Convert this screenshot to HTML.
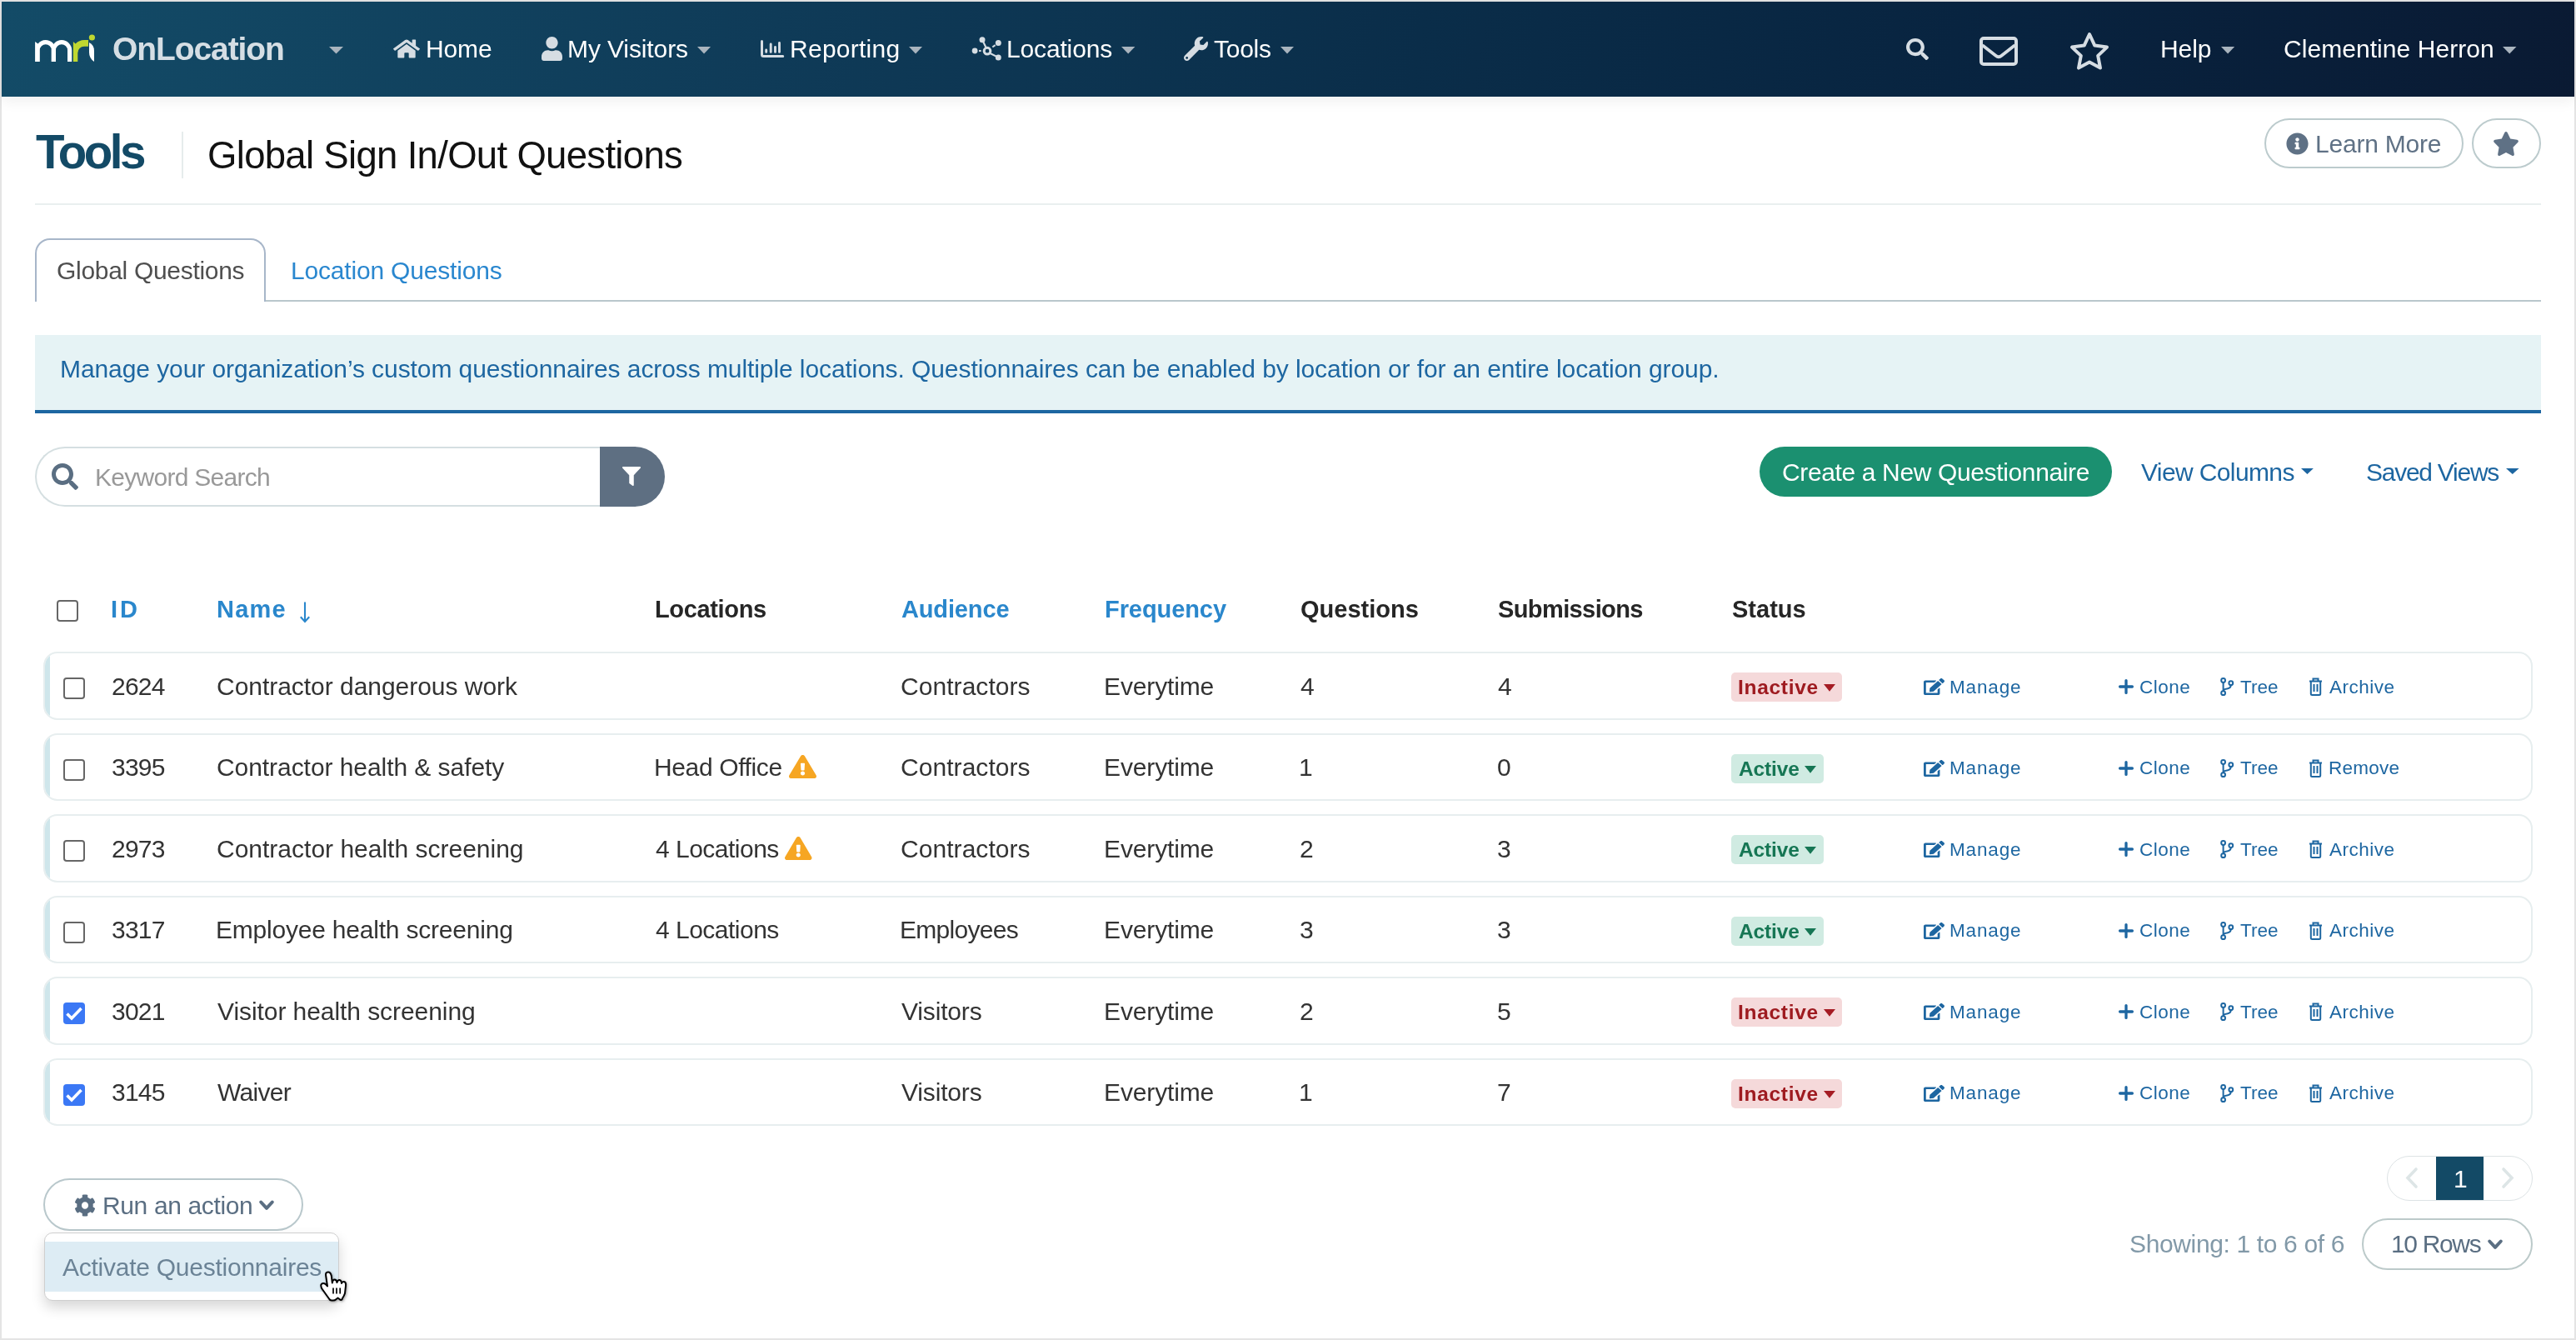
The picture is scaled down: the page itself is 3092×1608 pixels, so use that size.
<!DOCTYPE html>
<html><head><meta charset="utf-8">
<style>
html,body{margin:0;padding:0;}
body{width:3092px;height:1608px;overflow:hidden;position:relative;background:#e4e4e4;font-family:"Liberation Sans",sans-serif;}
.a{position:absolute;box-sizing:border-box;}
.t{position:absolute;white-space:pre;line-height:1;font-family:"Liberation Sans",sans-serif;will-change:transform;}
svg.a{overflow:visible;}
</style></head><body>
<div class="a" style="left:2px;top:2px;width:3088px;height:1604px;background:#fff"></div>
<div class="a" style="left:2px;top:2px;width:3088px;height:114px;background:linear-gradient(100deg,#134b67 0%,#0f3b58 30%,#0a2d49 55%,#08233f 78%,#0a1a33 100%);box-shadow:0 5px 16px rgba(0,0,0,0.065)"></div>
<svg class="a" style="left:0;top:0;width:200px;height:100px" viewBox="0 0 200 100"><path fill="#fff" d="M42.1,74V50L45.6,52.6Q49,48 54.6,48A12.4,12.4 0 0 1 67,60.3V74H61.8V60.3A7,7 0 0 0 47.8,60.3V74Z"/><path fill="#fff" d="M61.8,74V60.3A12.2,12.2 0 0 1 86.2,60.3V74H81V60.3A7,7 0 0 0 67,60.3V74Z"/><path fill="#bfd730" d="M87.9,74V50L90.6,52.5Q95,48 101,48H106V55.7H101A7.7,7.7 0 0 0 93.3,63.4V74Z"/><path fill="#fff" d="M107,51Q113,54 113,61V74Q107,70 107,63Z"/><circle fill="#bfd730" cx="110.4" cy="45" r="3.6"/></svg>
<svg class="a" style="left:395px;top:55.5px;width:17px;height:8.5px" viewBox="0 0 10 5" preserveAspectRatio="none"><path fill="#a9b4be" d="M0 0H10L5 5Z"/></svg>
<svg class="a" style="left:836.5px;top:55.5px;width:16.100000000000023px;height:8.5px" viewBox="0 0 10 5" preserveAspectRatio="none"><path fill="#a9b4be" d="M0 0H10L5 5Z"/></svg>
<svg class="a" style="left:1091px;top:55.5px;width:16px;height:8.5px" viewBox="0 0 10 5" preserveAspectRatio="none"><path fill="#a9b4be" d="M0 0H10L5 5Z"/></svg>
<svg class="a" style="left:1345.6px;top:55.5px;width:16.40000000000009px;height:8.5px" viewBox="0 0 10 5" preserveAspectRatio="none"><path fill="#a9b4be" d="M0 0H10L5 5Z"/></svg>
<svg class="a" style="left:1537px;top:55.5px;width:16px;height:8.5px" viewBox="0 0 10 5" preserveAspectRatio="none"><path fill="#a9b4be" d="M0 0H10L5 5Z"/></svg>
<svg class="a" style="left:2665.8px;top:55.5px;width:16.199999999999818px;height:8.5px" viewBox="0 0 10 5" preserveAspectRatio="none"><path fill="#a9b4be" d="M0 0H10L5 5Z"/></svg>
<svg class="a" style="left:3003.5px;top:55.5px;width:16.5px;height:8.5px" viewBox="0 0 10 5" preserveAspectRatio="none"><path fill="#a9b4be" d="M0 0H10L5 5Z"/></svg>
<svg class="a" style="left:472px;top:46px;width:32px;height:25px" viewBox="0 0 576 512" preserveAspectRatio="none"><path fill="#d6dde3" d="M280.37 148.26L96 300.11V464a16 16 0 0 0 16 16l112.06-.29a16 16 0 0 0 15.92-16V368a16 16 0 0 1 16-16h64a16 16 0 0 1 16 16v95.64a16 16 0 0 0 16 16.05L464 480a16 16 0 0 0 16-16V300L295.67 148.26a12.190 12.190 0 0 0-15.3 0zM571.6 251.47L488 182.560V44.050a12 12 0 0 0-12-12h-56a12 12 0 0 0-12 12v72.61L318.47 43a48 48 0 0 0-61 0L4.340 251.47a12 12 0 0 0-1.6 16.9l25.5 31A12 12 0 0 0 45.15 301l235.22-193.74a12.190 12.190 0 0 1 15.3 0L530.9 301a12 12 0 0 0 16.9-1.6l25.5-31a12 12 0 0 0-1.7-16.93z"/></svg>
<svg class="a" style="left:650px;top:44px;width:25px;height:29px" viewBox="0 0 448 512" preserveAspectRatio="none"><path fill="#d6dde3" d="M224 256c70.7 0 128-57.3 128-128S294.700 0 224 0 96 57.3 96 128s57.3 128 128 128zm89.6 32h-16.7c-22.2 10.2-46.9 16-72.9 16s-50.6-5.8-72.9-16h-16.7C60.2 288 0 348.2 0 422.4V464c0 26.5 21.5 48 48 48h352c26.5 0 48-21.5 48-48v-41.6c0-74.2-60.2-134.4-134.4-134.4z"/></svg>
<svg class="a" style="left:905px;top:38px;width:45px;height:42px" viewBox="0 0 45 42"><g fill="none" stroke="#d6dde3" stroke-linecap="round"><path d="M9.5,11.5V27.4Q9.5,29.4 11.5,29.4H34.7" stroke-width="3"/><path d="M14.7,22V24.4M20.2,15V24.4M25.5,18.5V24.4M30.5,13.4V24.4" stroke-width="2.9"/></g></svg>
<svg class="a" style="left:1160px;top:35px;width:50px;height:45px" viewBox="0 0 50 45"><g stroke="#d6dde3" stroke-width="2.1" fill="none"><line x1="19" y1="12.8" x2="23.5" y2="22"/><line x1="28.5" y1="29" x2="38.3" y2="33.9"/><line x1="15.1" y1="26" x2="17.6" y2="26"/><line x1="31.3" y1="21.5" x2="34.6" y2="19.2"/></g><circle cx="25" cy="26.2" r="3.85" fill="none" stroke="#d6dde3" stroke-width="3"/><circle cx="10.1" cy="26" r="3.4" fill="#d6dde3"/><circle cx="19" cy="12.8" r="3.5" fill="#d6dde3"/><circle cx="38.3" cy="16.5" r="3.5" fill="#d6dde3"/><circle cx="38.3" cy="33.9" r="3.5" fill="#d6dde3"/></svg>
<svg class="a" style="left:1421px;top:44px;width:29px;height:29px" viewBox="0 0 512 512" preserveAspectRatio="none"><path fill="#d6dde3" d="M507.73 109.1c-2.24-9.03-13.54-12.09-20.12-5.51l-74.36 74.36-67.88-11.31-11.31-67.88 74.36-74.36c6.62-6.62 3.43-17.9-5.66-20.16-47.38-11.74-99.55.91-136.58 37.93-39.64 39.64-50.55 97.1-34.05 147.2L18.74 402.76c-24.99 24.99-24.99 65.51 0 90.5 24.99 24.99 65.51 24.99 90.5 0l213.21-213.21c50.12 16.71 107.47 5.68 147.37-34.22 37.07-37.07 49.7-89.32 37.91-136.73zM64 472c-13.25 0-24-10.75-24-24 0-13.26 10.75-24 24-24s24 10.74 24 24c0 13.25-10.75 24-24 24z"/></svg>
<svg class="a" style="left:2288px;top:46px;width:27px;height:26px" viewBox="0 0 512 512" preserveAspectRatio="none"><path fill="#d6dde3" d="M505 442.7L405.3 343c-4.5-4.5-10.6-7-17-7H372c27.6-35.3 44-79.7 44-128C416 93.1 322.9 0 208 0S0 93.1 0 208s93.1 208 208 208c48.3 0 92.7-16.4 128-44v16.3c0 6.4 2.5 12.5 7 17l99.7 99.7c9.4 9.4 24.6 9.4 33.9 0l28.3-28.3c9.4-9.4 9.4-24.6.1-34zM208 336c-70.7 0-128-57.2-128-128 0-70.7 57.2-128 128-128 70.7 0 128 57.2 128 128 0 70.7-57.2 128-128 128z"/></svg>
<svg class="a" style="left:2376px;top:44px;width:46px;height:35px" viewBox="0 0 46 35"><rect x="2" y="2" width="42" height="31" rx="3" fill="none" stroke="#d6dde3" stroke-width="4"/><path d="M3.5,10.2L19.5,22.8Q23,25.6 26.5,22.8L42.5,10.2" fill="none" stroke="#d6dde3" stroke-width="3.8" stroke-linejoin="round"/></svg>
<svg class="a" style="left:2483px;top:38px;width:50px;height:48px" viewBox="0 0 50 48"><path d="M25,3L31.3,16.6L46,18.6L35.2,28.9L38,43.6L25,36.5L12,43.6L14.8,28.9L4,18.6L18.7,16.6Z" fill="none" stroke="#d6dde3" stroke-width="4" stroke-linejoin="round"/></svg>
<div class="a" style="left:218px;top:158px;width:2px;height:56px;background:#e6ecec"></div>
<div class="a" style="left:42px;top:244px;width:3008px;height:2px;background:#e9efef"></div>
<div class="a" style="left:2718px;top:142px;width:239px;height:60px;border:2px solid #bccbcd;border-radius:30px"></div>
<svg class="a" style="left:2744px;top:159px;width:27px;height:27px" viewBox="0 0 512 512" preserveAspectRatio="none"><path fill="#5f7185" d="M256 8C119.043 8 8 119.083 8 256c0 136.997 111.043 248 248 248s248-111.003 248-248C504 119.083 392.957 8 256 8zm0 110c23.196 0 42 18.804 42 42s-18.804 42-42 42-42-18.804-42-42 18.804-42 42-42zm56 254c0 6.627-5.373 12-12 12h-88c-6.627 0-12-5.373-12-12v-24c0-6.627 5.373-12 12-12h12v-64h-12c-6.627 0-12-5.373-12-12v-24c0-6.627 5.373-12 12-12h64c6.627 0 12 5.373 12 12v100h12c6.627 0 12 5.373 12 12v24z"/></svg>
<div class="a" style="left:2967px;top:142px;width:83px;height:60px;border:2px solid #bccbcd;border-radius:30px"></div>
<svg class="a" style="left:2992px;top:158px;width:32px;height:29px" viewBox="0 0 576 512" preserveAspectRatio="none"><path fill="#5f7185" d="M259.3 17.8L194 150.2 47.9 171.5c-26.2 3.8-36.7 36.1-17.7 54.6l105.7 103-25 145.5c-4.5 26.3 23.2 46 46.4 33.7L288 439.6l130.7 68.7c23.2 12.2 50.9-7.4 46.4-33.7l-25-145.5 105.7-103c19-18.5 8.5-50.8-17.7-54.6L382 150.2 316.7 17.8c-11.7-23.6-45.6-23.9-57.4 0z"/></svg>
<div class="a" style="left:319px;top:360px;width:2731px;height:2px;background:#b9c7cc"></div>
<div class="a" style="left:42px;top:286px;width:277px;height:76px;border:2px solid #a7b6c9;border-bottom:none;border-radius:18px 18px 0 0;background:#fff"></div>
<div class="a" style="left:42px;top:402px;width:3008px;height:94px;background:#e6f3f5;border-bottom:4px solid #1d66a1"></div>
<div class="a" style="left:42px;top:536px;width:680px;height:72px;border:2px solid #d5dfe1;border-right:none;border-radius:36px 0 0 36px"></div>
<svg class="a" style="left:62px;top:556px;width:32px;height:32px" viewBox="0 0 512 512" preserveAspectRatio="none"><path fill="#5a6e82" d="M505 442.7L405.3 343c-4.5-4.5-10.6-7-17-7H372c27.6-35.3 44-79.7 44-128C416 93.1 322.9 0 208 0S0 93.1 0 208s93.1 208 208 208c48.3 0 92.7-16.4 128-44v16.3c0 6.4 2.5 12.5 7 17l99.7 99.7c9.4 9.4 24.6 9.4 33.9 0l28.3-28.3c9.4-9.4 9.4-24.6.1-34zM208 336c-70.7 0-128-57.2-128-128 0-70.7 57.2-128 128-128 70.7 0 128 57.2 128 128 0 70.7-57.2 128-128 128z"/></svg>
<div class="a" style="left:720px;top:536px;width:78px;height:72px;background:#5e6f82;border-radius:0 36px 36px 0"></div>
<svg class="a" style="left:747px;top:560px;width:22px;height:23px" viewBox="0 0 512 512" preserveAspectRatio="none"><path fill="#fff" d="M487.976 0H24.028C2.71 0-8.047 25.866 7.058 40.971L192 225.941V432c0 7.831 3.821 15.17 10.237 19.662l80 55.98C298.02 518.69 320 507.493 320 487.98V225.941l184.947-184.97C520.021 25.896 509.338 0 487.976 0z"/></svg>
<div class="a" style="left:2112px;top:536px;width:423px;height:60px;background:#1b9070;border-radius:30px"></div>
<svg class="a" style="left:2762.4px;top:562px;width:14.900000000000091px;height:7px" viewBox="0 0 10 5" preserveAspectRatio="none"><path fill="#1d66a1" d="M0 0H10L5 5Z"/></svg>
<svg class="a" style="left:3008px;top:562px;width:15.599999999999909px;height:7px" viewBox="0 0 10 5" preserveAspectRatio="none"><path fill="#1d66a1" d="M0 0H10L5 5Z"/></svg>
<div class="a" style="left:68px;top:720px;width:26px;height:26px;border:2px solid #666;border-radius:4px;background:#fff"></div>
<svg class="a" style="left:358px;top:722px;width:16px;height:26px" viewBox="0 0 16 26"><path d="M8,0.5V23.5M2.8,18.2L8,24L13.2,18.2" fill="none" stroke="#2a87cc" stroke-width="2.1"/></svg>
<div class="a" style="left:52px;top:782.2px;width:2988px;height:81.5px;border:2px solid #e7eeef;border-radius:17px;background:#fff;overflow:hidden"><div style="position:absolute;left:0;top:0;width:6px;height:100%;background:#cfe6eb"></div></div>
<div class="a" style="left:76px;top:813.3px;width:26px;height:26.0px;border:2px solid #666;border-radius:4px;background:#fff"></div>
<div class="a" style="left:2078px;top:807.2px;width:133px;height:35.299999999999955px;background:#f5d9da;border-radius:5px"></div>
<svg class="a" style="left:2189px;top:821.3000000000001px;width:14px;height:8.699999999999932px" viewBox="0 0 10 5" preserveAspectRatio="none"><path fill="#a51c24" d="M0 0H10L5 5Z"/></svg>
<svg class="a" style="left:2309px;top:814.0px;width:25px;height:20.0px" viewBox="0 0 576 512" preserveAspectRatio="none"><path fill="#1d66a1" d="M402.6 83.2l90.2 90.2c3.8 3.8 3.8 10 0 13.8L274.4 405.6l-92.8 10.3c-12.4 1.4-22.9-9.1-21.5-21.5l10.3-92.8L388.8 83.2c3.8-3.8 10-3.8 13.8 0zm162-22.9l-48.8-48.8c-15.2-15.2-39.9-15.2-55.2 0l-35.4 35.4c-3.8 3.8-3.8 10 0 13.8l90.2 90.2c3.8 3.8 10 3.8 13.8 0l35.4-35.4c15.2-15.3 15.2-40 0-55.2zM384 346.2V448H64V128h229.8c3.2 0 6.2-1.3 8.5-3.5l40-40c7.6-7.6 2.2-20.5-8.5-20.5H48C21.5 64 0 85.5 0 112v352c0 26.5 21.5 48 48 48h352c26.5 0 48-21.5 48-48V306.2c0-10.7-12.9-16-20.5-8.5l-40 40c-2.2 2.3-3.5 5.3-3.5 8.5z"/></svg>
<svg class="a" style="left:2543px;top:815.0px;width:18px;height:18px" viewBox="0 0 18 18"><path d="M9,1.6V16.4M1.6,9H16.4" stroke="#1d66a1" stroke-width="3.3" stroke-linecap="round"/></svg>
<svg class="a" style="left:2665px;top:813.0px;width:17px;height:22px" viewBox="0 0 17 22"><g fill="none" stroke="#1d66a1" stroke-width="2"><circle cx="3.6" cy="3.5" r="2.4"/><circle cx="3.6" cy="18.7" r="2.4"/><circle cx="12.8" cy="6.7" r="2.4"/><path d="M3.6,5.9V16.3M12.8,9.1Q12.8,13 8.2,13.4Q3.6,13.8 3.6,16.3"/></g></svg>
<svg class="a" style="left:2771px;top:813.0px;width:17px;height:22px" viewBox="0 0 17 22"><g fill="none" stroke="#1d66a1" stroke-width="2"><path d="M1,4.5H16M5.5,4.5V1.5H11.5V4.5M2.8,4.5V19.5Q2.8,21 4.3,21H12.7Q14.2,21 14.2,19.5V4.5M6.5,8V17M10.5,8V17"/></g></svg>
<div class="a" style="left:52px;top:879.7px;width:2988px;height:81.5px;border:2px solid #e7eeef;border-radius:17px;background:#fff;overflow:hidden"><div style="position:absolute;left:0;top:0;width:6px;height:100%;background:#cfe6eb"></div></div>
<div class="a" style="left:76px;top:910.8px;width:26px;height:26.0px;border:2px solid #666;border-radius:4px;background:#fff"></div>
<svg class="a" style="left:947px;top:906.2px;width:33px;height:28.09999999999991px" viewBox="0 0 576 512" preserveAspectRatio="none"><path fill="#f6a623" d="M569.517 440.013C587.975 472.007 564.806 512 527.940 512H48.054c-36.937 0-59.999-40.055-41.577-71.987L246.423 24.012c18.467-32.009 64.720-31.951 83.154 0l239.940 416.001zM288 354c-25.405 0-46 20.595-46 46s20.595 46 46 46 46-20.595 46-46-20.595-46-46-46zm-43.673-165.346l7.418 136c.347 6.364 5.609 11.346 11.982 11.346h48.546c6.373 0 11.635-4.982 11.982-11.346l7.418-136c.375-6.874-5.098-12.654-11.982-12.654h-63.383c-6.884 0-12.356 5.780-11.981 12.654z"/></svg>
<div class="a" style="left:2078px;top:904.7px;width:111px;height:35.299999999999955px;background:#d0ebe2;border-radius:5px"></div>
<svg class="a" style="left:2166px;top:918.8000000000001px;width:14px;height:8.699999999999932px" viewBox="0 0 10 5" preserveAspectRatio="none"><path fill="#167654" d="M0 0H10L5 5Z"/></svg>
<svg class="a" style="left:2309px;top:911.5px;width:25px;height:20.0px" viewBox="0 0 576 512" preserveAspectRatio="none"><path fill="#1d66a1" d="M402.6 83.2l90.2 90.2c3.8 3.8 3.8 10 0 13.8L274.4 405.6l-92.8 10.3c-12.4 1.4-22.9-9.1-21.5-21.5l10.3-92.8L388.8 83.2c3.8-3.8 10-3.8 13.8 0zm162-22.9l-48.8-48.8c-15.2-15.2-39.9-15.2-55.2 0l-35.4 35.4c-3.8 3.8-3.8 10 0 13.8l90.2 90.2c3.8 3.8 10 3.8 13.8 0l35.4-35.4c15.2-15.3 15.2-40 0-55.2zM384 346.2V448H64V128h229.8c3.2 0 6.2-1.3 8.5-3.5l40-40c7.6-7.6 2.2-20.5-8.5-20.5H48C21.5 64 0 85.5 0 112v352c0 26.5 21.5 48 48 48h352c26.5 0 48-21.5 48-48V306.2c0-10.7-12.9-16-20.5-8.5l-40 40c-2.2 2.3-3.5 5.3-3.5 8.5z"/></svg>
<svg class="a" style="left:2543px;top:912.5px;width:18px;height:18px" viewBox="0 0 18 18"><path d="M9,1.6V16.4M1.6,9H16.4" stroke="#1d66a1" stroke-width="3.3" stroke-linecap="round"/></svg>
<svg class="a" style="left:2665px;top:910.5px;width:17px;height:22px" viewBox="0 0 17 22"><g fill="none" stroke="#1d66a1" stroke-width="2"><circle cx="3.6" cy="3.5" r="2.4"/><circle cx="3.6" cy="18.7" r="2.4"/><circle cx="12.8" cy="6.7" r="2.4"/><path d="M3.6,5.9V16.3M12.8,9.1Q12.8,13 8.2,13.4Q3.6,13.8 3.6,16.3"/></g></svg>
<svg class="a" style="left:2771px;top:910.5px;width:17px;height:22px" viewBox="0 0 17 22"><g fill="none" stroke="#1d66a1" stroke-width="2"><path d="M1,4.5H16M5.5,4.5V1.5H11.5V4.5M2.8,4.5V19.5Q2.8,21 4.3,21H12.7Q14.2,21 14.2,19.5V4.5M6.5,8V17M10.5,8V17"/></g></svg>
<div class="a" style="left:52px;top:977.2px;width:2988px;height:81.5px;border:2px solid #e7eeef;border-radius:17px;background:#fff;overflow:hidden"><div style="position:absolute;left:0;top:0;width:6px;height:100%;background:#cfe6eb"></div></div>
<div class="a" style="left:76px;top:1008.3px;width:26px;height:26.0px;border:2px solid #666;border-radius:4px;background:#fff"></div>
<svg class="a" style="left:941.5px;top:1003.7px;width:32.5px;height:28.09999999999991px" viewBox="0 0 576 512" preserveAspectRatio="none"><path fill="#f6a623" d="M569.517 440.013C587.975 472.007 564.806 512 527.940 512H48.054c-36.937 0-59.999-40.055-41.577-71.987L246.423 24.012c18.467-32.009 64.720-31.951 83.154 0l239.940 416.001zM288 354c-25.405 0-46 20.595-46 46s20.595 46 46 46 46-20.595 46-46-20.595-46-46-46zm-43.673-165.346l7.418 136c.347 6.364 5.609 11.346 11.982 11.346h48.546c6.373 0 11.635-4.982 11.982-11.346l7.418-136c.375-6.874-5.098-12.654-11.982-12.654h-63.383c-6.884 0-12.356 5.780-11.981 12.654z"/></svg>
<div class="a" style="left:2078px;top:1002.2px;width:111px;height:35.299999999999955px;background:#d0ebe2;border-radius:5px"></div>
<svg class="a" style="left:2166px;top:1016.3000000000001px;width:14px;height:8.699999999999932px" viewBox="0 0 10 5" preserveAspectRatio="none"><path fill="#167654" d="M0 0H10L5 5Z"/></svg>
<svg class="a" style="left:2309px;top:1009.0px;width:25px;height:20.0px" viewBox="0 0 576 512" preserveAspectRatio="none"><path fill="#1d66a1" d="M402.6 83.2l90.2 90.2c3.8 3.8 3.8 10 0 13.8L274.4 405.6l-92.8 10.3c-12.4 1.4-22.9-9.1-21.5-21.5l10.3-92.8L388.8 83.2c3.8-3.8 10-3.8 13.8 0zm162-22.9l-48.8-48.8c-15.2-15.2-39.9-15.2-55.2 0l-35.4 35.4c-3.8 3.8-3.8 10 0 13.8l90.2 90.2c3.8 3.8 10 3.8 13.8 0l35.4-35.4c15.2-15.3 15.2-40 0-55.2zM384 346.2V448H64V128h229.8c3.2 0 6.2-1.3 8.5-3.5l40-40c7.6-7.6 2.2-20.5-8.5-20.5H48C21.5 64 0 85.5 0 112v352c0 26.5 21.5 48 48 48h352c26.5 0 48-21.5 48-48V306.2c0-10.7-12.9-16-20.5-8.5l-40 40c-2.2 2.3-3.5 5.3-3.5 8.5z"/></svg>
<svg class="a" style="left:2543px;top:1010.0px;width:18px;height:18px" viewBox="0 0 18 18"><path d="M9,1.6V16.4M1.6,9H16.4" stroke="#1d66a1" stroke-width="3.3" stroke-linecap="round"/></svg>
<svg class="a" style="left:2665px;top:1008.0px;width:17px;height:22px" viewBox="0 0 17 22"><g fill="none" stroke="#1d66a1" stroke-width="2"><circle cx="3.6" cy="3.5" r="2.4"/><circle cx="3.6" cy="18.7" r="2.4"/><circle cx="12.8" cy="6.7" r="2.4"/><path d="M3.6,5.9V16.3M12.8,9.1Q12.8,13 8.2,13.4Q3.6,13.8 3.6,16.3"/></g></svg>
<svg class="a" style="left:2771px;top:1008.0px;width:17px;height:22px" viewBox="0 0 17 22"><g fill="none" stroke="#1d66a1" stroke-width="2"><path d="M1,4.5H16M5.5,4.5V1.5H11.5V4.5M2.8,4.5V19.5Q2.8,21 4.3,21H12.7Q14.2,21 14.2,19.5V4.5M6.5,8V17M10.5,8V17"/></g></svg>
<div class="a" style="left:52px;top:1074.7px;width:2988px;height:81.5px;border:2px solid #e7eeef;border-radius:17px;background:#fff;overflow:hidden"><div style="position:absolute;left:0;top:0;width:6px;height:100%;background:#cfe6eb"></div></div>
<div class="a" style="left:76px;top:1105.8px;width:26px;height:26.0px;border:2px solid #666;border-radius:4px;background:#fff"></div>
<div class="a" style="left:2078px;top:1099.7px;width:111px;height:35.299999999999955px;background:#d0ebe2;border-radius:5px"></div>
<svg class="a" style="left:2166px;top:1113.8px;width:14px;height:8.700000000000045px" viewBox="0 0 10 5" preserveAspectRatio="none"><path fill="#167654" d="M0 0H10L5 5Z"/></svg>
<svg class="a" style="left:2309px;top:1106.5px;width:25px;height:20.0px" viewBox="0 0 576 512" preserveAspectRatio="none"><path fill="#1d66a1" d="M402.6 83.2l90.2 90.2c3.8 3.8 3.8 10 0 13.8L274.4 405.6l-92.8 10.3c-12.4 1.4-22.9-9.1-21.5-21.5l10.3-92.8L388.8 83.2c3.8-3.8 10-3.8 13.8 0zm162-22.9l-48.8-48.8c-15.2-15.2-39.9-15.2-55.2 0l-35.4 35.4c-3.8 3.8-3.8 10 0 13.8l90.2 90.2c3.8 3.8 10 3.8 13.8 0l35.4-35.4c15.2-15.3 15.2-40 0-55.2zM384 346.2V448H64V128h229.8c3.2 0 6.2-1.3 8.5-3.5l40-40c7.6-7.6 2.2-20.5-8.5-20.5H48C21.5 64 0 85.5 0 112v352c0 26.5 21.5 48 48 48h352c26.5 0 48-21.5 48-48V306.2c0-10.7-12.9-16-20.5-8.5l-40 40c-2.2 2.3-3.5 5.3-3.5 8.5z"/></svg>
<svg class="a" style="left:2543px;top:1107.5px;width:18px;height:18px" viewBox="0 0 18 18"><path d="M9,1.6V16.4M1.6,9H16.4" stroke="#1d66a1" stroke-width="3.3" stroke-linecap="round"/></svg>
<svg class="a" style="left:2665px;top:1105.5px;width:17px;height:22px" viewBox="0 0 17 22"><g fill="none" stroke="#1d66a1" stroke-width="2"><circle cx="3.6" cy="3.5" r="2.4"/><circle cx="3.6" cy="18.7" r="2.4"/><circle cx="12.8" cy="6.7" r="2.4"/><path d="M3.6,5.9V16.3M12.8,9.1Q12.8,13 8.2,13.4Q3.6,13.8 3.6,16.3"/></g></svg>
<svg class="a" style="left:2771px;top:1105.5px;width:17px;height:22px" viewBox="0 0 17 22"><g fill="none" stroke="#1d66a1" stroke-width="2"><path d="M1,4.5H16M5.5,4.5V1.5H11.5V4.5M2.8,4.5V19.5Q2.8,21 4.3,21H12.7Q14.2,21 14.2,19.5V4.5M6.5,8V17M10.5,8V17"/></g></svg>
<div class="a" style="left:52px;top:1172.2px;width:2988px;height:81.5px;border:2px solid #e7eeef;border-radius:17px;background:#fff;overflow:hidden"><div style="position:absolute;left:0;top:0;width:6px;height:100%;background:#cfe6eb"></div></div>
<svg class="a" style="left:76px;top:1203.3px;width:26px;height:26px" viewBox="0 0 26 26"><rect width="26" height="26" rx="4" fill="#3b78f5"/><path d="M4.5,13.5L10,19L21.5,7" fill="none" stroke="#fff" stroke-width="3.6"/></svg>
<div class="a" style="left:2078px;top:1197.2px;width:133px;height:35.299999999999955px;background:#f5d9da;border-radius:5px"></div>
<svg class="a" style="left:2189px;top:1211.3px;width:14px;height:8.700000000000045px" viewBox="0 0 10 5" preserveAspectRatio="none"><path fill="#a51c24" d="M0 0H10L5 5Z"/></svg>
<svg class="a" style="left:2309px;top:1204.0px;width:25px;height:20.0px" viewBox="0 0 576 512" preserveAspectRatio="none"><path fill="#1d66a1" d="M402.6 83.2l90.2 90.2c3.8 3.8 3.8 10 0 13.8L274.4 405.6l-92.8 10.3c-12.4 1.4-22.9-9.1-21.5-21.5l10.3-92.8L388.8 83.2c3.8-3.8 10-3.8 13.8 0zm162-22.9l-48.8-48.8c-15.2-15.2-39.9-15.2-55.2 0l-35.4 35.4c-3.8 3.8-3.8 10 0 13.8l90.2 90.2c3.8 3.8 10 3.8 13.8 0l35.4-35.4c15.2-15.3 15.2-40 0-55.2zM384 346.2V448H64V128h229.8c3.2 0 6.2-1.3 8.5-3.5l40-40c7.6-7.6 2.2-20.5-8.5-20.5H48C21.5 64 0 85.5 0 112v352c0 26.5 21.5 48 48 48h352c26.5 0 48-21.5 48-48V306.2c0-10.7-12.9-16-20.5-8.5l-40 40c-2.2 2.3-3.5 5.3-3.5 8.5z"/></svg>
<svg class="a" style="left:2543px;top:1205.0px;width:18px;height:18px" viewBox="0 0 18 18"><path d="M9,1.6V16.4M1.6,9H16.4" stroke="#1d66a1" stroke-width="3.3" stroke-linecap="round"/></svg>
<svg class="a" style="left:2665px;top:1203.0px;width:17px;height:22px" viewBox="0 0 17 22"><g fill="none" stroke="#1d66a1" stroke-width="2"><circle cx="3.6" cy="3.5" r="2.4"/><circle cx="3.6" cy="18.7" r="2.4"/><circle cx="12.8" cy="6.7" r="2.4"/><path d="M3.6,5.9V16.3M12.8,9.1Q12.8,13 8.2,13.4Q3.6,13.8 3.6,16.3"/></g></svg>
<svg class="a" style="left:2771px;top:1203.0px;width:17px;height:22px" viewBox="0 0 17 22"><g fill="none" stroke="#1d66a1" stroke-width="2"><path d="M1,4.5H16M5.5,4.5V1.5H11.5V4.5M2.8,4.5V19.5Q2.8,21 4.3,21H12.7Q14.2,21 14.2,19.5V4.5M6.5,8V17M10.5,8V17"/></g></svg>
<div class="a" style="left:52px;top:1269.7px;width:2988px;height:81.5px;border:2px solid #e7eeef;border-radius:17px;background:#fff;overflow:hidden"><div style="position:absolute;left:0;top:0;width:6px;height:100%;background:#cfe6eb"></div></div>
<svg class="a" style="left:76px;top:1300.8px;width:26px;height:26px" viewBox="0 0 26 26"><rect width="26" height="26" rx="4" fill="#3b78f5"/><path d="M4.5,13.5L10,19L21.5,7" fill="none" stroke="#fff" stroke-width="3.6"/></svg>
<div class="a" style="left:2078px;top:1294.7px;width:133px;height:35.299999999999955px;background:#f5d9da;border-radius:5px"></div>
<svg class="a" style="left:2189px;top:1308.8px;width:14px;height:8.700000000000045px" viewBox="0 0 10 5" preserveAspectRatio="none"><path fill="#a51c24" d="M0 0H10L5 5Z"/></svg>
<svg class="a" style="left:2309px;top:1301.5px;width:25px;height:20.0px" viewBox="0 0 576 512" preserveAspectRatio="none"><path fill="#1d66a1" d="M402.6 83.2l90.2 90.2c3.8 3.8 3.8 10 0 13.8L274.4 405.6l-92.8 10.3c-12.4 1.4-22.9-9.1-21.5-21.5l10.3-92.8L388.8 83.2c3.8-3.8 10-3.8 13.8 0zm162-22.9l-48.8-48.8c-15.2-15.2-39.9-15.2-55.2 0l-35.4 35.4c-3.8 3.8-3.8 10 0 13.8l90.2 90.2c3.8 3.8 10 3.8 13.8 0l35.4-35.4c15.2-15.3 15.2-40 0-55.2zM384 346.2V448H64V128h229.8c3.2 0 6.2-1.3 8.5-3.5l40-40c7.6-7.6 2.2-20.5-8.5-20.5H48C21.5 64 0 85.5 0 112v352c0 26.5 21.5 48 48 48h352c26.5 0 48-21.5 48-48V306.2c0-10.7-12.9-16-20.5-8.5l-40 40c-2.2 2.3-3.5 5.3-3.5 8.5z"/></svg>
<svg class="a" style="left:2543px;top:1302.5px;width:18px;height:18px" viewBox="0 0 18 18"><path d="M9,1.6V16.4M1.6,9H16.4" stroke="#1d66a1" stroke-width="3.3" stroke-linecap="round"/></svg>
<svg class="a" style="left:2665px;top:1300.5px;width:17px;height:22px" viewBox="0 0 17 22"><g fill="none" stroke="#1d66a1" stroke-width="2"><circle cx="3.6" cy="3.5" r="2.4"/><circle cx="3.6" cy="18.7" r="2.4"/><circle cx="12.8" cy="6.7" r="2.4"/><path d="M3.6,5.9V16.3M12.8,9.1Q12.8,13 8.2,13.4Q3.6,13.8 3.6,16.3"/></g></svg>
<svg class="a" style="left:2771px;top:1300.5px;width:17px;height:22px" viewBox="0 0 17 22"><g fill="none" stroke="#1d66a1" stroke-width="2"><path d="M1,4.5H16M5.5,4.5V1.5H11.5V4.5M2.8,4.5V19.5Q2.8,21 4.3,21H12.7Q14.2,21 14.2,19.5V4.5M6.5,8V17M10.5,8V17"/></g></svg>
<div class="a" style="left:52px;top:1414px;width:312px;height:63px;border:2px solid #b9c8cc;border-radius:32px"></div>
<svg class="a" style="left:89px;top:1433px;width:26px;height:27px" viewBox="0 0 512 512" preserveAspectRatio="none"><path fill="#5a6e82" d="M487.4 315.7l-42.6-24.6c4.3-23.2 4.3-47 0-70.2l42.6-24.6c4.9-2.8 7.1-8.6 5.5-14-11.1-35.6-30-67.8-54.7-94.6-3.8-4.1-10-5.1-14.8-2.3L380.8 110c-17.9-15.4-38.5-27.3-60.8-35.1V25.8c0-5.6-3.9-10.5-9.4-11.7-36.7-8.2-74.3-7.8-109.2 0-5.5 1.2-9.4 6.1-9.4 11.7V75c-22.2 7.9-42.8 19.8-60.8 35.1L88.7 85.5c-4.9-2.8-11-1.9-14.8 2.3-24.7 26.7-43.6 58.9-54.7 94.6-1.7 5.4.6 11.2 5.5 14L67.3 221c-4.3 23.2-4.3 47 0 70.2l-42.6 24.6c-4.9 2.8-7.1 8.6-5.5 14 11.1 35.6 30 67.8 54.7 94.6 3.8 4.1 10 5.1 14.8 2.3l42.6-24.6c17.9 15.4 38.5 27.3 60.8 35.1v49.2c0 5.6 3.9 10.5 9.4 11.7 36.7 8.2 74.3 7.8 109.2 0 5.5-1.2 9.4-6.1 9.4-11.7v-49.2c22.2-7.9 42.8-19.8 60.8-35.1l42.6 24.6c4.9 2.8 11 1.9 14.8-2.3 24.7-26.7 43.6-58.9 54.7-94.6 1.5-5.5-.7-11.3-5.6-14.1zM256 336c-44.1 0-80-35.9-80-80s35.9-80 80-80 80 35.9 80 80-35.9 80-80 80z"/></svg>
<svg class="a" style="left:311px;top:1440px;width:18px;height:14px" viewBox="0 0 18 14"><path d="M2.2,2.5L9,9.8L15.8,2.5" fill="none" stroke="#5a6e82" stroke-width="4" stroke-linecap="round" stroke-linejoin="round"/></svg>
<div class="a" style="left:53px;top:1479px;width:354px;height:82px;border:1px solid #cfcfcf;border-radius:10px;background:#fff;box-shadow:0 8px 16px rgba(0,0,0,0.16)"></div>
<div class="a" style="left:54px;top:1490px;width:352px;height:60px;background:#ddecf4"></div>
<svg class="a" style="left:370px;top:1515px;width:50px;height:50px;filter:drop-shadow(1px 1.5px 1.5px rgba(0,0,0,0.35))" viewBox="0 0 50 50"><path d="M15.5,29Q14.5,25.5 18,25Q20.5,24.8 23,28.5L21.2,16Q20.5,11.5 23.8,11.5Q26.8,11.5 27.8,16L28.8,24.5Q29.5,20.5 31.5,20.5Q34,20.5 34.5,24Q35.5,20.8 37.5,21Q39.8,21.3 40,25Q41,22.5 43,23Q45.5,23.5 45,28L44,37Q43,40 41,43L40.5,44.5Q39,45.5 37.5,44L35.5,42.5L33,44.5Q32,45.5 30,45.5L28,45.5Q26,45.5 25,43.5L17.5,33Q15.5,31 15.5,29Z" fill="#fff" stroke="#000" stroke-width="2" stroke-linejoin="round"/><path d="M30,30.5V37.6M34,30.5V37.6M38.2,30.5V37.6" stroke="#000" stroke-width="1.7"/></svg>
<div class="a" style="left:2865px;top:1387px;width:175px;height:54px;border:1px solid #dde3e5;border-radius:27px"></div>
<div class="a" style="left:2924px;top:1388px;width:57px;height:52px;background:#134a66"></div>
<svg class="a" style="left:2886px;top:1401px;width:17px;height:25px" viewBox="0 0 17 25"><path d="M14,2L4,12.5L14,23" fill="none" stroke="#dde5e6" stroke-width="3.6" stroke-linecap="round"/></svg>
<svg class="a" style="left:3002px;top:1401px;width:17px;height:25px" viewBox="0 0 17 25"><path d="M3,2L13,12.5L3,23" fill="none" stroke="#dde5e6" stroke-width="3.6" stroke-linecap="round"/></svg>
<div class="a" style="left:2835px;top:1462px;width:205px;height:62px;border:2px solid #bccaca;border-radius:31px"></div>
<svg class="a" style="left:2986px;top:1487px;width:18px;height:14px" viewBox="0 0 18 14"><path d="M2.2,2.5L9,9.8L15.8,2.5" fill="none" stroke="#5a6e82" stroke-width="4" stroke-linecap="round" stroke-linejoin="round"/></svg>
<span class="t" style="left:135.00px;top:38.98px;font-size:39px;color:#d5dee4;font-weight:700;letter-spacing:-1.092px;">OnLocation</span>
<span class="t" style="left:510.60px;top:43.60px;font-size:30px;color:#ffffff;letter-spacing:-0.147px;">Home</span>
<span class="t" style="left:681.00px;top:43.60px;font-size:30px;color:#ffffff;letter-spacing:-0.113px;">My Visitors</span>
<span class="t" style="left:948.00px;top:43.60px;font-size:30px;color:#ffffff;letter-spacing:0.263px;">Reporting</span>
<span class="t" style="left:1207.80px;top:43.60px;font-size:30px;color:#ffffff;letter-spacing:-0.153px;">Locations</span>
<span class="t" style="left:1457.00px;top:43.60px;font-size:30px;color:#ffffff;letter-spacing:-0.259px;">Tools</span>
<span class="t" style="left:2593.00px;top:43.60px;font-size:30px;color:#ffffff;letter-spacing:-0.105px;">Help</span>
<span class="t" style="left:2741.00px;top:43.60px;font-size:30px;color:#ffffff;letter-spacing:0.057px;">Clementine Herron</span>
<span class="t" style="left:42.60px;top:154.96px;font-size:56.5px;color:#134a66;font-weight:700;letter-spacing:-3.510px;">Tools</span>
<span class="t" style="left:249.00px;top:164.28px;font-size:45.5px;color:#111111;letter-spacing:-0.687px;">Global Sign In/Out Questions</span>
<span class="t" style="left:2778.80px;top:157.90px;font-size:30px;color:#5f7185;letter-spacing:-0.225px;">Learn More</span>
<span class="t" style="left:68.20px;top:309.60px;font-size:30px;color:#4f4f4f;letter-spacing:-0.302px;">Global Questions</span>
<span class="t" style="left:349.00px;top:309.60px;font-size:30px;color:#2a87cf;letter-spacing:-0.184px;">Location Questions</span>
<span class="t" style="left:72.00px;top:428.00px;font-size:30px;color:#1d66a1;letter-spacing:-0.083px;">Manage your organization’s custom questionnaires across multiple locations. Questionnaires can be enabled by location or for an entire location group.</span>
<span class="t" style="left:113.50px;top:557.90px;font-size:30px;color:#999999;letter-spacing:-0.717px;">Keyword Search</span>
<span class="t" style="left:2138.70px;top:552.20px;font-size:30px;color:#ffffff;letter-spacing:-0.366px;">Create a New Questionnaire</span>
<span class="t" style="left:2570.30px;top:552.20px;font-size:30px;color:#1d66a1;letter-spacing:-0.617px;">View Columns</span>
<span class="t" style="left:2840.00px;top:552.20px;font-size:30px;color:#1d66a1;letter-spacing:-1.258px;">Saved Views</span>
<span class="t" style="left:133.30px;top:717.05px;font-size:29px;color:#2a87cc;font-weight:700;letter-spacing:2.843px;">ID</span>
<span class="t" style="left:260.30px;top:717.05px;font-size:29px;color:#2a87cc;font-weight:700;letter-spacing:1.214px;">Name</span>
<span class="t" style="left:786.30px;top:717.05px;font-size:29px;color:#262626;font-weight:700;letter-spacing:-0.354px;">Locations</span>
<span class="t" style="left:1082.00px;top:717.05px;font-size:29px;color:#2a87cc;font-weight:700;letter-spacing:-0.143px;">Audience</span>
<span class="t" style="left:1326.40px;top:717.05px;font-size:29px;color:#2a87cc;font-weight:700;letter-spacing:-0.079px;">Frequency</span>
<span class="t" style="left:1560.70px;top:717.05px;font-size:29px;color:#262626;font-weight:700;letter-spacing:0.016px;">Questions</span>
<span class="t" style="left:1798.40px;top:717.05px;font-size:29px;color:#262626;font-weight:700;letter-spacing:-0.606px;">Submissions</span>
<span class="t" style="left:2078.80px;top:717.05px;font-size:29px;color:#262626;font-weight:700;letter-spacing:0.020px;">Status</span>
<span class="t" style="left:133.80px;top:808.90px;font-size:30px;color:#333333;letter-spacing:-0.785px;">2624</span>
<span class="t" style="left:260.00px;top:808.90px;font-size:30px;color:#333333;letter-spacing:-0.035px;">Contractor dangerous work</span>
<span class="t" style="left:1081.00px;top:808.90px;font-size:30px;color:#333333;letter-spacing:0.055px;">Contractors</span>
<span class="t" style="left:1325.40px;top:808.90px;font-size:30px;color:#333333;letter-spacing:-0.134px;">Everytime</span>
<span class="t" style="left:1561.00px;top:808.90px;font-size:30px;color:#333333;">4</span>
<span class="t" style="left:1798.40px;top:808.90px;font-size:30px;color:#333333;">4</span>
<span class="t" style="left:2085.80px;top:813.26px;font-size:24.5px;color:#9e1b20;font-weight:700;letter-spacing:0.712px;">Inactive</span>
<span class="t" style="left:2340.30px;top:813.85px;font-size:22.5px;color:#1d66a1;letter-spacing:0.861px;">Manage</span>
<span class="t" style="left:2567.80px;top:813.85px;font-size:22.5px;color:#1d66a1;letter-spacing:0.481px;">Clone</span>
<span class="t" style="left:2689.00px;top:813.85px;font-size:22.5px;color:#1d66a1;">Tree</span>
<span class="t" style="left:2796.40px;top:813.85px;font-size:22.5px;color:#1d66a1;letter-spacing:0.515px;">Archive</span>
<span class="t" style="left:133.80px;top:906.40px;font-size:30px;color:#333333;letter-spacing:-0.785px;">3395</span>
<span class="t" style="left:260.00px;top:906.40px;font-size:30px;color:#333333;letter-spacing:-0.062px;">Contractor health &amp; safety</span>
<span class="t" style="left:785.00px;top:906.40px;font-size:30px;color:#333333;letter-spacing:-0.368px;">Head Office</span>
<span class="t" style="left:1081.00px;top:906.40px;font-size:30px;color:#333333;letter-spacing:0.055px;">Contractors</span>
<span class="t" style="left:1325.40px;top:906.40px;font-size:30px;color:#333333;letter-spacing:-0.134px;">Everytime</span>
<span class="t" style="left:1559.00px;top:906.40px;font-size:30px;color:#333333;">1</span>
<span class="t" style="left:1797.40px;top:906.40px;font-size:30px;color:#333333;">0</span>
<span class="t" style="left:2086.80px;top:910.76px;font-size:24.5px;color:#167654;font-weight:700;letter-spacing:-0.142px;">Active</span>
<span class="t" style="left:2340.30px;top:911.35px;font-size:22.5px;color:#1d66a1;letter-spacing:0.861px;">Manage</span>
<span class="t" style="left:2567.80px;top:911.35px;font-size:22.5px;color:#1d66a1;letter-spacing:0.481px;">Clone</span>
<span class="t" style="left:2689.00px;top:911.35px;font-size:22.5px;color:#1d66a1;">Tree</span>
<span class="t" style="left:2795.40px;top:911.35px;font-size:22.5px;color:#1d66a1;letter-spacing:0.266px;">Remove</span>
<span class="t" style="left:133.80px;top:1003.90px;font-size:30px;color:#333333;letter-spacing:-0.785px;">2973</span>
<span class="t" style="left:260.00px;top:1003.90px;font-size:30px;color:#333333;">Contractor health screening</span>
<span class="t" style="left:787.00px;top:1003.90px;font-size:30px;color:#333333;letter-spacing:-0.514px;">4 Locations</span>
<span class="t" style="left:1081.00px;top:1003.90px;font-size:30px;color:#333333;letter-spacing:0.055px;">Contractors</span>
<span class="t" style="left:1325.40px;top:1003.90px;font-size:30px;color:#333333;letter-spacing:-0.134px;">Everytime</span>
<span class="t" style="left:1560.00px;top:1003.90px;font-size:30px;color:#333333;">2</span>
<span class="t" style="left:1797.40px;top:1003.90px;font-size:30px;color:#333333;">3</span>
<span class="t" style="left:2086.80px;top:1008.26px;font-size:24.5px;color:#167654;font-weight:700;letter-spacing:-0.142px;">Active</span>
<span class="t" style="left:2340.30px;top:1008.85px;font-size:22.5px;color:#1d66a1;letter-spacing:0.861px;">Manage</span>
<span class="t" style="left:2567.80px;top:1008.85px;font-size:22.5px;color:#1d66a1;letter-spacing:0.481px;">Clone</span>
<span class="t" style="left:2689.00px;top:1008.85px;font-size:22.5px;color:#1d66a1;">Tree</span>
<span class="t" style="left:2796.40px;top:1008.85px;font-size:22.5px;color:#1d66a1;letter-spacing:0.515px;">Archive</span>
<span class="t" style="left:133.80px;top:1101.40px;font-size:30px;color:#333333;letter-spacing:-0.785px;">3317</span>
<span class="t" style="left:259.00px;top:1101.40px;font-size:30px;color:#333333;letter-spacing:-0.209px;">Employee health screening</span>
<span class="t" style="left:787.00px;top:1101.40px;font-size:30px;color:#333333;letter-spacing:-0.514px;">4 Locations</span>
<span class="t" style="left:1080.00px;top:1101.40px;font-size:30px;color:#333333;letter-spacing:-0.713px;">Employees</span>
<span class="t" style="left:1325.40px;top:1101.40px;font-size:30px;color:#333333;letter-spacing:-0.134px;">Everytime</span>
<span class="t" style="left:1560.00px;top:1101.40px;font-size:30px;color:#333333;">3</span>
<span class="t" style="left:1797.40px;top:1101.40px;font-size:30px;color:#333333;">3</span>
<span class="t" style="left:2086.80px;top:1105.76px;font-size:24.5px;color:#167654;font-weight:700;letter-spacing:-0.142px;">Active</span>
<span class="t" style="left:2340.30px;top:1106.35px;font-size:22.5px;color:#1d66a1;letter-spacing:0.861px;">Manage</span>
<span class="t" style="left:2567.80px;top:1106.35px;font-size:22.5px;color:#1d66a1;letter-spacing:0.481px;">Clone</span>
<span class="t" style="left:2689.00px;top:1106.35px;font-size:22.5px;color:#1d66a1;">Tree</span>
<span class="t" style="left:2796.40px;top:1106.35px;font-size:22.5px;color:#1d66a1;letter-spacing:0.515px;">Archive</span>
<span class="t" style="left:133.80px;top:1198.90px;font-size:30px;color:#333333;letter-spacing:-0.785px;">3021</span>
<span class="t" style="left:261.00px;top:1198.90px;font-size:30px;color:#333333;letter-spacing:-0.070px;">Visitor health screening</span>
<span class="t" style="left:1082.00px;top:1198.90px;font-size:30px;color:#333333;letter-spacing:-0.158px;">Visitors</span>
<span class="t" style="left:1325.40px;top:1198.90px;font-size:30px;color:#333333;letter-spacing:-0.134px;">Everytime</span>
<span class="t" style="left:1560.00px;top:1198.90px;font-size:30px;color:#333333;">2</span>
<span class="t" style="left:1797.40px;top:1198.90px;font-size:30px;color:#333333;">5</span>
<span class="t" style="left:2085.80px;top:1203.26px;font-size:24.5px;color:#9e1b20;font-weight:700;letter-spacing:0.712px;">Inactive</span>
<span class="t" style="left:2340.30px;top:1203.85px;font-size:22.5px;color:#1d66a1;letter-spacing:0.861px;">Manage</span>
<span class="t" style="left:2567.80px;top:1203.85px;font-size:22.5px;color:#1d66a1;letter-spacing:0.481px;">Clone</span>
<span class="t" style="left:2689.00px;top:1203.85px;font-size:22.5px;color:#1d66a1;">Tree</span>
<span class="t" style="left:2796.40px;top:1203.85px;font-size:22.5px;color:#1d66a1;letter-spacing:0.515px;">Archive</span>
<span class="t" style="left:133.80px;top:1296.40px;font-size:30px;color:#333333;letter-spacing:-0.785px;">3145</span>
<span class="t" style="left:261.00px;top:1296.40px;font-size:30px;color:#333333;letter-spacing:-0.687px;">Waiver</span>
<span class="t" style="left:1082.00px;top:1296.40px;font-size:30px;color:#333333;letter-spacing:-0.158px;">Visitors</span>
<span class="t" style="left:1325.40px;top:1296.40px;font-size:30px;color:#333333;letter-spacing:-0.134px;">Everytime</span>
<span class="t" style="left:1559.00px;top:1296.40px;font-size:30px;color:#333333;">1</span>
<span class="t" style="left:1797.40px;top:1296.40px;font-size:30px;color:#333333;">7</span>
<span class="t" style="left:2085.80px;top:1300.76px;font-size:24.5px;color:#9e1b20;font-weight:700;letter-spacing:0.712px;">Inactive</span>
<span class="t" style="left:2340.30px;top:1301.35px;font-size:22.5px;color:#1d66a1;letter-spacing:0.861px;">Manage</span>
<span class="t" style="left:2567.80px;top:1301.35px;font-size:22.5px;color:#1d66a1;letter-spacing:0.481px;">Clone</span>
<span class="t" style="left:2689.00px;top:1301.35px;font-size:22.5px;color:#1d66a1;">Tree</span>
<span class="t" style="left:2796.40px;top:1301.35px;font-size:22.5px;color:#1d66a1;letter-spacing:0.515px;">Archive</span>
<span class="t" style="left:123.00px;top:1432.20px;font-size:30px;color:#5a6e82;letter-spacing:-0.370px;">Run an action</span>
<span class="t" style="left:74.70px;top:1505.60px;font-size:30px;color:#6b8396;letter-spacing:-0.251px;">Activate Questionnaires</span>
<span class="t" style="left:2945.00px;top:1399.80px;font-size:30px;color:#ffffff;">1</span>
<span class="t" style="left:2556.00px;top:1477.90px;font-size:30px;color:#8299a8;letter-spacing:-0.358px;">Showing: 1 to 6 of 6</span>
<span class="t" style="left:2870.30px;top:1477.90px;font-size:30px;color:#5a6e82;letter-spacing:-1.336px;">10 Rows</span>
</body></html>
